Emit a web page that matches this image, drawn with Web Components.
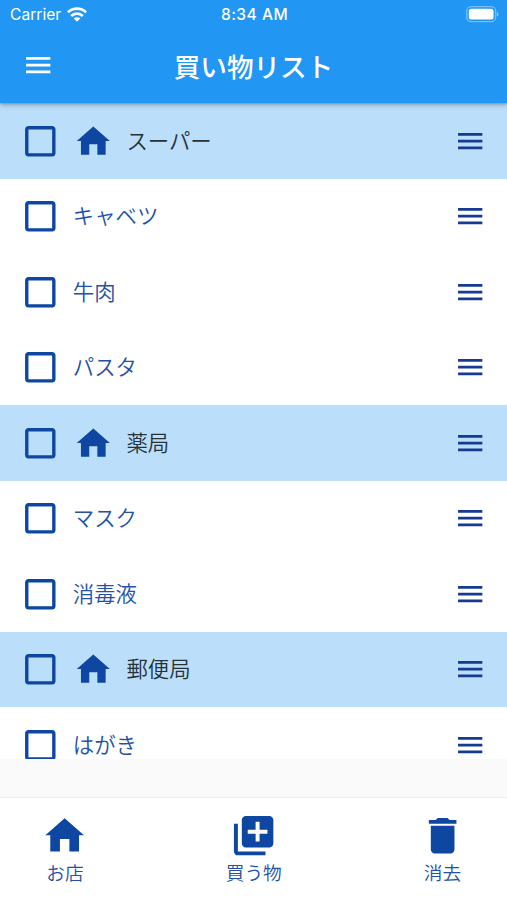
<!DOCTYPE html>
<html lang="ja">
<head>
    <meta charset="UTF-8">
    <meta name="viewport" content="width=device-width, initial-scale=1.0">
    <title>買い物リスト</title>
    <style>
        body{
            margin: 0;
            height: 900px;
            overflow: hidden;
            display: flex;
            flex-direction: column;
            background-color: #fafafa;
            color: #0d47a1;
            font-family: "Noto Sans CJK JP", sans-serif;
        }
    </style>
</head>
<body>
    <app-header>買い物リスト</app-header>
    <shopping-list>
        <list-row shop>スーパー</list-row>
        <list-row>キャベツ</list-row>
        <list-row>牛肉</list-row>
        <list-row>パスタ</list-row>
        <list-row shop>薬局</list-row>
        <list-row>マスク</list-row>
        <list-row>消毒液</list-row>
        <list-row shop>郵便局</list-row>
        <list-row>はがき</list-row>
    </shopping-list>
    <bottom-bar>
        <bar-button icon="home">お店</bar-button>
        <bar-button icon="add">買う物</bar-button>
        <bar-button icon="trash">消去</bar-button>
    </bottom-bar>

    <template id="header-template">
        <style>
            :host{
                display: flex;
                flex-direction: column;
                flex: none;
                height: 103.3px;
                position: relative;
                z-index: 1;
                background-color: #2196f3;
                color: #fff;
                box-shadow: 0 2px 5px rgba(0,0,0,.25), 0 1px 2px rgba(0,0,0,.15);
            }
            .status{
                display: grid;
                grid-template-columns: 1fr auto 1fr;
                align-items: center;
                height: 29px;
                padding: 0 8px 0 10px;
                font: 400 15.6px/29px Inter, sans-serif;
            }
            .carrier{
                display: flex;
                align-items: center;
                gap: 6px;
            }
            .time{
                font-weight: 500;
                letter-spacing: .45px;
            }
            .battery{
                justify-self: end;
            }
            svg{
                display: block;
            }
            .bar{
                display: grid;
                grid-template-columns: 54px 1fr 54px;
                align-items: center;
                height: 73px;
                padding: 0 22.3px;
            }
            h1{
                margin: 0;
                text-align: center;
                font-size: 26.6px;
                line-height: 40px;
                font-weight: 500;
            }
        </style>
        <div class="status">
            <div class="carrier">
                <span>Carrier</span>
                <svg width="20" height="15" viewBox="0 0 20 15" fill="none" stroke="#fff" stroke-width="2.7">
                    <path d="M.9 5.4a13 13 0 0 1 18.2 0M4.2 9a8.3 8.3 0 0 1 11.6 0"/>
                    <path d="M10 14.7 6.7 11.5a4.7 4.7 0 0 1 6.6 0z" fill="#fff" stroke="none"/>
                </svg>
            </div>
            <span class="time">8:34 AM</span>
            <svg class="battery" width="33" height="17" viewBox="0 0 33 17">
                <rect x=".7" y=".7" width="29" height="15" rx="4.5" fill="none" stroke="#fff" stroke-opacity=".4" stroke-width="1.3"/>
                <rect x="2.8" y="2.8" width="24.8" height="10.8" rx="2.7" fill="#fff"/>
                <path d="M31 6v4.5a2.5 2.5 0 0 0 0-4.5" fill="#fff" fill-opacity=".5"/>
            </svg>
        </div>
        <div class="bar">
            <md-icon name="menu" style="--size: 32.4px"></md-icon>
            <h1><slot></slot></h1>
        </div>
    </template>

    <template id="list-template">
        <style>
            :host{
                display: block;
                flex: none;
                height: 655.5px;
                overflow: hidden;
                background-color: #fff;
            }
        </style>
        <slot></slot>
    </template>

    <template id="row-template">
        <style>
            :host{
                display: flex;
                align-items: center;
                box-sizing: border-box;
                height: 75.5px;
                padding: 0 20.5px 0 19.7px;
                font-size: 21.4px;
                line-height: 32px;
                font-weight: 350;
                background-color: #fff;
            }
            :host([shop]){
                background-color: #bbdefb;
            }
            .shop{
                display: none;
                margin: 0 13px 0 0;
            }
            :host([shop]) .shop{
                display: block;
            }
            .text{
                flex: 1;
                padding-bottom: 3px;
                color: #2450a8;
            }
            :host([shop]) .text{
                color: #263238;
            }
            .check{
                margin-right: 12.5px;
            }
            .handle{
                color: #153a92;
            }
        </style>
        <md-icon class="check" name="box" style="--size: 40.6px"></md-icon>
        <md-icon class="shop" name="home" style="--size: 40.6px"></md-icon>
        <span class="text"><slot></slot></span>
        <md-icon class="handle" name="menu" style="--size: 32.4px"></md-icon>
    </template>

    <template id="bar-template">
        <style>
            :host{
                display: flex;
                justify-content: space-between;
                box-sizing: border-box;
                height: 102.5px;
                margin-top: auto;
                padding: 14.5px 24.5px 0 25px;
                background-color: #fff;
                box-shadow: 0 -1px 1.5px rgba(0,0,0,.06);
            }
        </style>
        <slot></slot>
    </template>

    <template id="button-template">
        <style>
            :host{
                display: flex;
                flex-direction: column;
                align-items: center;
                width: 80px;
                font-size: 18.7px;
                line-height: 26px;
                font-weight: 350;
            }
            span{
                color: #2450a8;
            }
        </style>
        <md-icon style="--size: 47.3px"></md-icon>
        <span><slot></slot></span>
    </template>

    <script>

        // 24x24 のアイコン
        const icons = {
            menu: 'M3 18h18v-2H3v2zm0-5h18v-2H3v2zm0-7v2h18V6H3z',
            home: 'M9.6 20v-6.3h4.8V20h4.9v-8.2h2.5L12 3.2 2.2 11.8h2.5V20z',
            box: 'M19 5v14H5V5h14m0-2H5c-1.1 0-2 .9-2 2v14c0 1.1.9 2 2 2h14c1.1 0 2-.9 2-2V5c0-1.1-.9-2-2-2z',
            add: 'M4 6H2v14c0 1.1.9 2 2 2h14v-2H4V6zm16-4H8c-1.1 0-2 .9-2 2v12c0 1.1.9 2 2 2h12c1.1 0 2-.9 2-2V4c0-1.1-.9-2-2-2zm-1 9h-4v4h-2v-4H9V9h4V5h2v4h4v2z',
            trash: 'M6 19c0 1.1.9 2 2 2h8c1.1 0 2-.9 2-2V7H6v12zM19 4h-3.5l-1-1h-5l-1 1H5v2h14V4z'
        }

        class MdIcon extends HTMLElement {
            constructor(){
                super()
                this.attachShadow({mode:'open'})
            }
            static get observedAttributes(){
                return ['name']
            }
            attributeChangedCallback(){
                this.shadowRoot.innerHTML = `
                    <style>
                        :host{ display: block; flex: none; width: var(--size); height: var(--size); }
                        svg{ display: block; width: 100%; height: 100%; }
                    </style>
                    <svg viewBox="0 0 24 24" fill="currentColor"><path d="${icons[this.getAttribute('name')]}"/></svg>`
            }
        }
        customElements.define('md-icon', MdIcon)

        // テンプレートを影子DOMに複製する共通クラス
        class TemplateElement extends HTMLElement {
            constructor(id){
                super()
                const content = document.querySelector(id).content
                this.attachShadow({mode:'open'}).appendChild(document.importNode(content, true))
            }
        }

        class AppHeader extends TemplateElement {
            constructor(){
                super('#header-template')
            }
        }
        customElements.define('app-header', AppHeader)

        class ShoppingList extends TemplateElement {
            constructor(){
                super('#list-template')
            }
        }
        customElements.define('shopping-list', ShoppingList)

        class ListRow extends TemplateElement {
            constructor(){
                super('#row-template')
            }
        }
        customElements.define('list-row', ListRow)

        class BottomBar extends TemplateElement {
            constructor(){
                super('#bar-template')
            }
        }
        customElements.define('bottom-bar', BottomBar)

        class BarButton extends TemplateElement {
            constructor(){
                super('#button-template')
            }
            connectedCallback(){
                this.shadowRoot.querySelector('md-icon').setAttribute('name', this.getAttribute('icon'))
            }
        }
        customElements.define('bar-button', BarButton)

    </script>
</body>
</html>
